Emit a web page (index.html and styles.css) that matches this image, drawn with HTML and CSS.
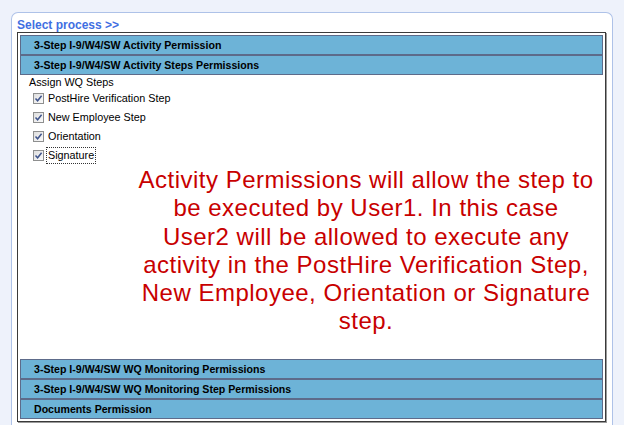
FILE: index.html
```html
<!DOCTYPE html>
<html>
<head>
<meta charset="utf-8">
<link rel="stylesheet" href="styles.css">
</head>
<body>
<div class="panel">
  <div class="title">Select process &gt;&gt;</div>
  <div class="grid">
    <div class="hdr">3-Step I-9/W4/SW Activity Permission</div>
    <div class="hdr">3-Step I-9/W4/SW Activity Steps Permissions</div>
    <div class="body">
      <div class="sub">Assign WQ Steps</div>
      <ul class="steps">
        <li class="step"><span class="cb"><svg viewBox="0 0 9 9" width="9" height="9"><path d="M1.5 4.5 L3.6 6.8 L7.6 1.8" fill="none" stroke="#3f548c" stroke-width="1.5"/></svg></span><span class="lbl">PostHire Verification Step</span></li>
        <li class="step"><span class="cb"><svg viewBox="0 0 9 9" width="9" height="9"><path d="M1.5 4.5 L3.6 6.8 L7.6 1.8" fill="none" stroke="#3f548c" stroke-width="1.5"/></svg></span><span class="lbl">New Employee Step</span></li>
        <li class="step"><span class="cb"><svg viewBox="0 0 9 9" width="9" height="9"><path d="M1.5 4.5 L3.6 6.8 L7.6 1.8" fill="none" stroke="#3f548c" stroke-width="1.5"/></svg></span><span class="lbl">Orientation</span></li>
        <li class="step"><span class="cb"><svg viewBox="0 0 9 9" width="9" height="9"><path d="M1.5 4.5 L3.6 6.8 L7.6 1.8" fill="none" stroke="#3f548c" stroke-width="1.5"/></svg></span><span class="lbl focus">Signature</span></li>
      </ul>
      <p class="note">Activity Permissions will allow the step to<br>be executed by User1. In this case<br>User2 will be allowed to execute any<br>activity in the PostHire Verification Step,<br>New Employee, Orientation or Signature<br>step.</p>
    </div>
    <div class="hdr">3-Step I-9/W4/SW WQ Monitoring Permissions</div>
    <div class="hdr">3-Step I-9/W4/SW WQ Monitoring Step Permissions</div>
    <div class="hdr">Documents Permission</div>
  </div>
</div>
</body>
</html>
```
FILE: styles.css
```css
html, body {
  margin: 0;
  height: 100%;
  overflow: hidden;
}
body {
  background: #eef2fb;
  font-family: "Liberation Sans", Arial, sans-serif;
  color: #000;
}
.panel {
  margin: 12px 0 0 11px;
  width: 589px;
  height: 407px;
  padding: 5px 6px 0 5px;
  background: #fff;
  border: 1px solid #aec2e8;
  border-bottom: none;
  border-radius: 7px 7px 0 0;
}
.title {
  height: 14px;
  font-size: 12px;
  line-height: 14px;
  font-weight: bold;
  color: #3f6fe2;
}
.grid {
  box-sizing: border-box;
  width: 589px;
  border: 1px solid #3a3a3a;
  padding: 2px;
  box-shadow: 1px 1px 0 #9a9a9a;
}
.hdr {
  height: 18px;
  line-height: 18px;
  border: 1px solid #5d6b8a;
  background: #6db3d7;
  font-size: 10.6px;
  font-weight: bold;
  padding-left: 13px;
  white-space: nowrap;
}
.body {
  height: 284px;
  overflow: hidden;
}
.sub {
  margin-top: 1px;
  padding-left: 9px;
  font-size: 10.8px;
  line-height: 13px;
}
.steps {
  list-style: none;
  margin: 0;
  padding: 0 0 0 13px;
}
.step {
  height: 19px;
  display: flex;
  align-items: center;
  gap: 3px;
  font-size: 10.8px;
}
.cb {
  box-sizing: border-box;
  width: 11px;
  height: 11px;
  border: 1px solid #8e8f8f;
  background: linear-gradient(135deg, #dedede, #fbfbfb);
  display: flex;
  align-items: center;
  justify-content: center;
}
.lbl {
  padding: 1px 1px;
  line-height: 13px;
}
.focus {
  outline: 1px dotted #333;
}
.note {
  margin: 1px 0 0 109px;
  font-size: 24px;
  letter-spacing: 0.5px;
  line-height: 28.3px;
  color: #c80000;
  text-align: center;
  white-space: nowrap;
}
```
